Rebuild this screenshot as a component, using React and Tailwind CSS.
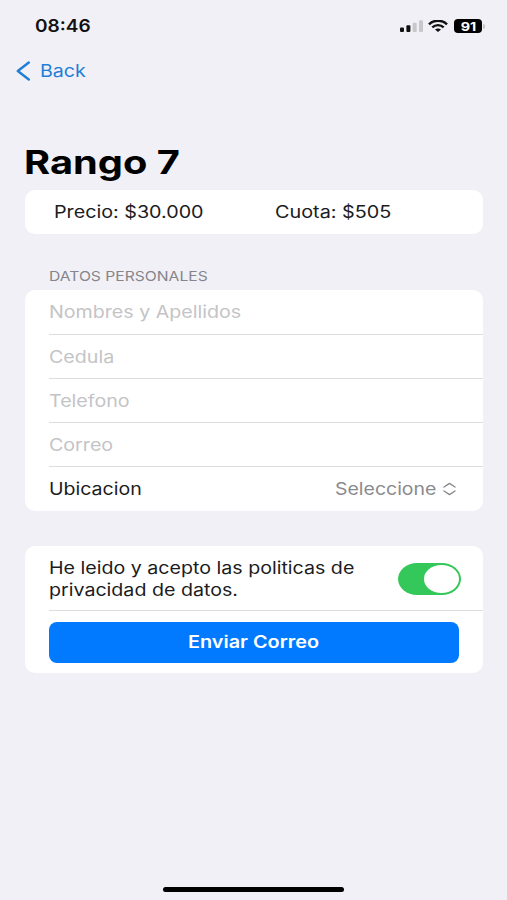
import React, { useState } from 'react';
import clsx from 'clsx';

const fields = ['Nombres y Apellidos', 'Cedula', 'Telefono', 'Correo'];

// Wide lettering: stretches the text from its left edge
const Wide = ({ className, children }) => (
    <span className={clsx('inline-block origin-left whitespace-nowrap', className)}>{children}</span>
);

const StatusBar = () => (
    <div className="flex h-[52px] items-center justify-between pl-[34.5px] pr-[22px]">
        <Wide className="scale-x-[1.12] pt-[2px] text-[17px] font-semibold text-[#111]">08:46</Wide>
        <div className="flex items-center">
            <svg className="h-[13px] w-[24px]" viewBox="0 0 24 13">
                <rect x="0" y="7.5" width="4" height="4.5" rx="1" fill="#111" />
                <rect x="6.4" y="5.3" width="4" height="6.7" rx="1" fill="#111" />
                <rect x="12.7" y="2.7" width="4" height="9.3" rx="1" fill="#c8c8cc" />
                <rect x="19" y="0.3" width="4" height="11.7" rx="1" fill="#c8c8cc" />
            </svg>
            <svg className="ml-[4px] h-[13px] w-[20px]" viewBox="0 0 20 13" fill="none" stroke="#111">
                <path d="M1 4.4C6 -0.4 14 -0.4 19 4.4" strokeWidth="2.6" />
                <path d="M4.3 7.4C7.5 4.4 12.5 4.4 15.7 7.4" strokeWidth="2.4" />
                <path d="M10 12L7 9.6C8.6 8.2 11.4 8.2 13 9.6Z" fill="#111" stroke="none" />
            </svg>
            <div className="ml-[6px] flex h-[14px] w-[28px] items-center justify-center rounded-[4px] bg-black">
                <span className="inline-block scale-x-[1.2] pt-px text-[12px] leading-none font-bold text-white">91</span>
            </div>
            <div className="ml-px h-[5px] w-[2px] rounded-r-full bg-[#c4c4c8]" />
        </div>
    </div>
);

const Card = ({ className, children }) => (
    <section className={clsx('mx-[24.5px] overflow-hidden rounded-[10px] bg-white', className)}>{children}</section>
);

const Toggle = ({ checked, onChange }) => (
    <button
        role="switch"
        aria-checked={checked}
        onClick={() => onChange(!checked)}
        className={clsx(
            'mt-[2px] flex h-[32px] w-[63px] items-center rounded-[19px/16px] px-[2px]',
            checked ? 'justify-end bg-[#34c759]' : 'justify-start bg-[#e9e9ea]'
        )}
    >
        <span className="h-[28px] w-[35px] rounded-[50%] bg-white" />
    </button>
);

const App = () => {
    const [accepted, setAccepted] = useState(true);

    return (
        <div className="flex h-[900px] w-[507px] flex-col overflow-hidden bg-[#f1f0f6] font-['Inter','Liberation_Sans',sans-serif] text-[17px] text-[#1c1c1e]">
            <StatusBar />

            {/* Navigation */}
            <nav className="flex h-[38px] items-center pl-[16px] text-[#1f7fd6]">
                <svg className="h-[20px] w-[15px]" viewBox="0 0 15 20" fill="none" stroke="currentColor" strokeWidth="2.4" strokeLinecap="round" strokeLinejoin="round">
                    <path d="M12.8 1.5L1.8 10L12.8 18.5" />
                </svg>
                <Wide className="ml-[9px] scale-x-[1.155] pt-[2px]">Back</Wide>
            </nav>

            <h1 className="mt-[52px] h-[48px] pl-[24px] text-[33px] leading-[40px] font-bold text-black">
                <Wide className="scale-x-[1.205]">Rango 7</Wide>
            </h1>

            <Card className="grid h-[44px] shrink-0 grid-cols-[221px_1fr] items-center pl-[29px]">
                <Wide className="scale-x-[1.16] pt-[2px]">Precio: $30.000</Wide>
                <Wide className="scale-x-[1.165] pt-[2px]">Cuota: $505</Wide>
            </Card>

            <h2 className="mt-[32px] mb-[4px] h-[20px] pl-[49px] text-[13.5px] leading-[20px] text-[#85858b]">
                <Wide className="scale-x-[1.16]">DATOS PERSONALES</Wide>
            </h2>

            {/* Personal data */}
            <Card className="shrink-0 pl-[24.5px]">
                {fields.map((field) => (
                    <div key={field} className="flex h-[44px] items-center border-b border-[#dedee0] text-[#c4c4c6] first:h-[45px]">
                        <Wide className="scale-x-[1.155] pt-[2px]">{field}</Wide>
                    </div>
                ))}
                <div className="flex h-[44px] items-center">
                    <Wide className="scale-x-[1.15] pt-[2px]">Ubicacion</Wide>
                    <div className="ml-auto flex w-[148px] items-center text-[#8a8a8e]">
                        <Wide className="w-[108px] scale-x-[1.145] pt-[2px]">Seleccione</Wide>
                        <svg className="h-[14px] w-[13px]" viewBox="0 0 13 14" fill="none" stroke="currentColor" strokeWidth="1.4" strokeLinecap="round" strokeLinejoin="round">
                            <path d="M1 5L6.5 1.4L12 5M1 9L6.5 12.6L12 9" />
                        </svg>
                    </div>
                </div>
            </Card>

            {/* Privacy consent and submit */}
            <Card className="mt-[35px] h-[127px] shrink-0 pl-[24.5px]">
                <div className="flex h-[65px] items-center justify-between border-b border-[#dedee0] pr-[21.5px]">
                    <p className="pt-[2px] leading-[22px]">
                        <Wide className="scale-x-[1.154]">He leido y acepto las politicas de</Wide>
                        <br />
                        <Wide className="scale-x-[1.154]">privacidad de datos.</Wide>
                    </p>
                    <Toggle checked={accepted} onChange={setAccepted} />
                </div>
                <button className="mt-[11px] flex h-[41px] w-[410px] items-center rounded-[8px] bg-[#027aff] pl-[139px] text-left font-semibold text-white">
                    <Wide className="scale-x-[1.168] pt-px">Enviar Correo</Wide>
                </button>
            </Card>

            {/* Home indicator */}
            <div className="mx-auto mt-auto mb-[8px] h-[5px] w-[181px] rounded-full bg-black" />
        </div>
    );
};

export default App;
